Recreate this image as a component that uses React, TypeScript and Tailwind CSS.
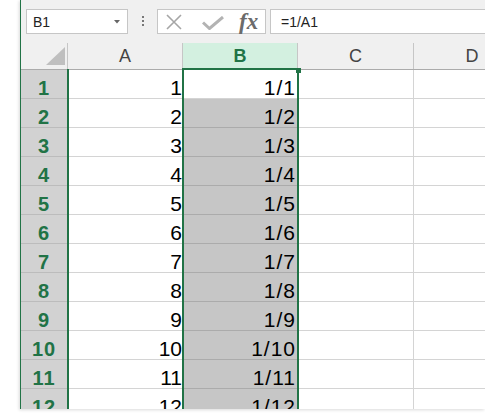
import React from "react";

const GREEN = "#217346";
const rows = Array.from({ length: 12 }, (_, i) => i + 1);

export default function App() {
  return (
    <div
      className="w-[485px] h-[420px] bg-white pl-[20px] overflow-hidden"
      style={{ fontFamily: '"Liberation Sans", Arial, sans-serif' }}
    >
      <div className="w-[465px] h-[409px] border-l border-[#217346] bg-[#f0f0f0] flex flex-col overflow-hidden shadow-[-1px_1px_3px_rgba(0,0,0,0.15)]">
        {/* Toolbar / formula bar */}
        <div className="h-[43px] shrink-0 flex items-start pt-[9px] overflow-hidden">
          <div className="shrink-0 ml-[5px] w-[102px] h-[25px] bg-white border border-[#c6c6c6] flex items-center pl-[6px] pr-[7px]">
            <span className="text-[14px] leading-[22px] text-[#222] flex-1">B1</span>
            <svg width="6" height="4" viewBox="0 0 6 4">
              <path d="M0 0 L6 0 L3 3.5 Z" fill="#666" />
            </svg>
          </div>
          <div className="shrink-0 ml-[14px] mt-[7px] flex flex-col gap-[2px]">
            <div className="w-[2px] h-[2px] bg-[#777]" />
            <div className="w-[2px] h-[2px] bg-[#777]" />
            <div className="w-[2px] h-[2px] bg-[#777]" />
          </div>
          <div className="shrink-0 ml-[13px] w-[109px] h-[25px] bg-white border border-[#c6c6c6] flex items-center pl-[8px]">
            <svg width="16" height="16" viewBox="0 0 16 16" className="shrink-0 mt-[1px]">
              <path d="M1 1 L15 15 M15 1 L1 15" stroke="#a6a6a6" strokeWidth="1.6" fill="none" />
            </svg>
            <svg width="22" height="14" viewBox="0 0 22 14" className="shrink-0 ml-[20px] mt-[2px]">
              <path d="M1 6.5 L7.5 12.5 L21 1" stroke="#b3b3b3" strokeWidth="3" fill="none" />
            </svg>
            <span
              className="shrink-0 ml-[15px] text-[23px] leading-[22px] italic font-bold text-[#6b6b6b]"
              style={{ fontFamily: '"Liberation Serif", "Times New Roman", serif' }}
            >
              fx
            </span>
          </div>
          <div className="shrink-0 ml-[4px] w-[240px] h-[25px] bg-white border border-[#c6c6c6] flex items-center pl-[10px]">
            <span className="text-[14px] leading-[22px] text-[#222]">=1/A1</span>
          </div>
        </div>

        {/* Grid */}
        <div className="relative flex-1">
          {/* Column headers */}
          <div className="flex h-[27px] border-b border-[#ababab]">
            <div className="w-[47px] shrink-0 border-r border-[#c6c6c6] relative">
              <svg width="20" height="19" viewBox="0 0 20 19" className="absolute left-[25px] top-[4px]">
                <path d="M19 0 L19 18 L0 18 Z" fill="#bfbfbf" />
              </svg>
            </div>
            <div className="w-[115px] shrink-0 border-r border-[#c6c6c6] text-center text-[18px] leading-[26px] text-[#444]">
              A
            </div>
            <div className="w-[115px] shrink-0 border-r border-[#c6c6c6] bg-[#d3f0e0] text-center text-[18px] leading-[26px] font-bold text-[#217346]">
              B
            </div>
            <div className="w-[116px] shrink-0 border-r border-[#c6c6c6] text-center text-[18px] leading-[26px] text-[#444]">
              C
            </div>
            <div className="w-[116px] shrink-0 text-center text-[18px] leading-[26px] text-[#444]">
              D
            </div>
          </div>

          {/* Rows */}
          {rows.map((r) => (
            <div key={r} className="flex h-[29px]">
              <div className="w-[47px] shrink-0 bg-[#d2d2d2] border-r border-b border-[#bcbcbc] flex items-end justify-center text-[20px] leading-[20px] font-bold text-[#217346] tracking-[1px]">
                {r}
              </div>
              <div className="w-[115px] shrink-0 bg-white border-r border-b border-[#d4d4d4] flex items-end justify-end text-[21px] leading-[20px] text-black">
                {r}
              </div>
              <div
                className={
                  r === 1
                    ? "w-[115px] shrink-0 bg-white border-r border-b border-[#d4d4d4] flex items-end justify-end pr-[1px] text-[21px] leading-[20px] text-black tracking-[1px]"
                    : "w-[115px] shrink-0 bg-[#c6c6c6] border-r border-b border-[#ababab] flex items-end justify-end pr-[1px] text-[21px] leading-[20px] text-black tracking-[1px]"
                }
              >
                1/{r}
              </div>
              <div className="w-[116px] shrink-0 bg-white border-r border-b border-[#d4d4d4]" />
              <div className="w-[116px] shrink-0 bg-white border-b border-[#d4d4d4]" />
            </div>
          ))}

          {/* Row header highlight line */}
          <div className="absolute left-[46px] top-[26px] w-[2px] h-[400px]" style={{ background: GREEN }} />
          {/* Selection rectangle */}
          <div className="absolute left-[161px] top-[25px] w-[117px] h-[400px] border-2 border-[#217346] pointer-events-none" />
          {/* Fill handle */}
          <div className="absolute left-[275px] top-[25px] w-[5px] h-[5px] bg-[#217346]" />
        </div>
      </div>
    </div>
  );
}
